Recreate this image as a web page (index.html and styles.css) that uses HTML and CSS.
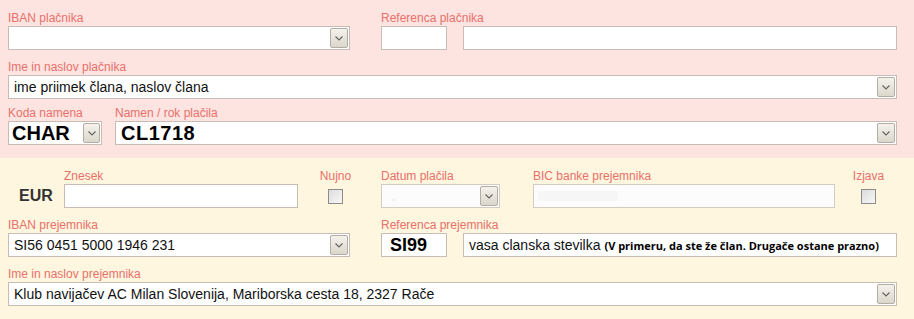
FILE: index.html
```html
<!DOCTYPE html>
<html lang="sl">
<head>
    <meta charset="UTF-8">
    <title>UPN nalog</title>
    <link rel="stylesheet" href="styles.css">
</head>
<body>

<div class="upn">
    <div class="section payer">
        <div class="row row-split">
            <div class="field">
                <div class="label">IBAN plačnika</div>
                <div class="box select"><span class="value"></span><span class="btn"><svg width="8" height="5" viewBox="0 0 8 5"><polyline points="0.5,0.5 4,4 7.5,0.5" fill="none" stroke="#666" stroke-width="1.2"/></svg></span></div>
            </div>
            <div class="field">
                <div class="label">Referenca plačnika</div>
                <div class="ref">
                    <div class="box ref-model"></div>
                    <div class="box ref-number"></div>
                </div>
            </div>
        </div>

        <div class="row row-gap">
            <div class="field">
                <div class="label">Ime in naslov plačnika</div>
                <div class="box select"><span class="value">ime priimek člana, naslov člana</span><span class="btn"><svg width="8" height="5" viewBox="0 0 8 5"><polyline points="0.5,0.5 4,4 7.5,0.5" fill="none" stroke="#666" stroke-width="1.2"/></svg></span></div>
            </div>
        </div>

        <div class="row row-purpose">
            <div class="field">
                <div class="label">Koda namena</div>
                <div class="box select code"><span class="value big">CHAR</span><span class="btn"><svg width="8" height="5" viewBox="0 0 8 5"><polyline points="0.5,0.5 4,4 7.5,0.5" fill="none" stroke="#666" stroke-width="1.2"/></svg></span></div>
            </div>
            <div class="field">
                <div class="label">Namen / rok plačila</div>
                <div class="box select"><span class="value big purpose">CL1718</span><span class="btn"><svg width="8" height="5" viewBox="0 0 8 5"><polyline points="0.5,0.5 4,4 7.5,0.5" fill="none" stroke="#666" stroke-width="1.2"/></svg></span></div>
            </div>
        </div>
    </div>

    <div class="section payee">
        <div class="row-amount">
            <div class="currency">EUR</div>
            <div class="field amount">
                <div class="label">Znesek</div>
                <div class="box"></div>
            </div>
            <div class="field check-field urgent">
                <div class="label">Nujno</div>
                <span class="check"></span>
            </div>
            <div class="field date">
                <div class="label">Datum plačila</div>
                <div class="box select disabled"><span class="value"><span class="dot"></span></span><span class="btn"><svg width="8" height="5" viewBox="0 0 8 5"><polyline points="0.5,0.5 4,4 7.5,0.5" fill="none" stroke="#666" stroke-width="1.2"/></svg></span></div>
            </div>
            <div class="field bic">
                <div class="label">BIC banke prejemnika</div>
                <div class="box disabled"><span class="blur"></span></div>
            </div>
            <div class="field check-field statement">
                <div class="label">Izjava</div>
                <span class="check"></span>
            </div>
        </div>

        <div class="row row-split row-gap">
            <div class="field">
                <div class="label">IBAN prejemnika</div>
                <div class="box select"><span class="value">SI56 0451 5000 1946 231</span><span class="btn"><svg width="8" height="5" viewBox="0 0 8 5"><polyline points="0.5,0.5 4,4 7.5,0.5" fill="none" stroke="#666" stroke-width="1.2"/></svg></span></div>
            </div>
            <div class="field">
                <div class="label">Referenca prejemnika</div>
                <div class="ref">
                    <div class="box ref-model"><span class="value model">SI99</span></div>
                    <div class="box ref-number"><span class="value">vasa clanska stevilka <b class="note">(V primeru, da ste že član. Drugače ostane prazno)</b></span></div>
                </div>
            </div>
        </div>

        <div class="row row-gap">
            <div class="field">
                <div class="label">Ime in naslov prejemnika</div>
                <div class="box select"><span class="value">Klub navijačev AC Milan Slovenija, Mariborska cesta 18, 2327 Rače</span><span class="btn"><svg width="8" height="5" viewBox="0 0 8 5"><polyline points="0.5,0.5 4,4 7.5,0.5" fill="none" stroke="#666" stroke-width="1.2"/></svg></span></div>
            </div>
        </div>
    </div>
</div>

</body>
</html>
```

FILE: styles.css
```css
body {
    margin: 0;
    font-family: "Liberation Sans", Arial, sans-serif;
    background-color: #fff6df;
}
.upn {
    width: 914px;
}
.section {
    padding: 10px 17px 0 8px;
}
.payer {
    background-color: #fee4e1;
    height: 148px;
}
.payee {
    background-color: #fff6df;
    height: 151px;
}
.row {
    display: grid;
    grid-template-columns: 889px;
}
.row-gap {
    margin-top: 9px;
}
.row-purpose {
    margin-top: 6px;
    grid-template-columns: 94px 782px;
    column-gap: 13px;
}
.row-split {
    grid-template-columns: 342px 516px;
    column-gap: 31px;
}
.field {
    min-width: 0;
}
.label {
    height: 16px;
    font-size: 12px;
    line-height: 16px;
    color: #e8706a;
    white-space: nowrap;
}
.box {
    box-sizing: border-box;
    height: 24px;
    background-color: #fff;
    border: 1px solid #c6beb6;
    display: flex;
    align-items: center;
}
.select .value {
    flex: 1;
}
.value {
    padding-left: 5px;
    font-size: 14px;
    color: #111;
    white-space: nowrap;
    overflow: hidden;
}
.btn {
    box-sizing: border-box;
    width: 18px;
    height: 20px;
    margin-right: 1px;
    border: 1px solid #b3ada3;
    border-radius: 2px;
    background: linear-gradient(#f5f2ec, #dcd7cc);
    display: flex;
    align-items: center;
    justify-content: center;
}
.code .btn {
    width: 17px;
}
.big {
    font-size: 20px;
    font-weight: bold;
    color: #000;
    padding-left: 3px;
}
.purpose {
    padding-left: 5px;
    letter-spacing: 0.5px;
}
.ref {
    display: flex;
    gap: 16px;
}
.ref-model {
    width: 66px;
}
.ref-number {
    flex: 1;
    min-width: 0;
}
.model {
    padding-left: 8px;
    font-size: 18px;
    font-weight: bold;
    color: #000;
}
.note {
    font-family: "Open Sans", "Liberation Sans", sans-serif;
    font-size: 11px;
    color: #000;
}

/* amount row: fixed widths, uneven spacing */
.row-amount {
    display: flex;
}
.currency {
    width: 56px;
    padding-top: 16px;
    height: 24px;
    line-height: 24px;
    text-align: center;
    font-size: 16px;
    font-weight: bold;
    color: #333;
}
.amount {
    width: 234px;
}
.urgent {
    width: 33px;
    margin-left: 21px;
}
.date {
    width: 119px;
    margin-left: 29px;
}
.bic {
    width: 302px;
    margin-left: 33px;
}
.statement {
    width: 35px;
    margin-left: 16px;
}
.check-field {
    display: flex;
    flex-direction: column;
    align-items: center;
}
.check {
    box-sizing: border-box;
    width: 15px;
    height: 15px;
    margin-top: 5px;
    border: 1px solid #8e8c88;
    background: linear-gradient(135deg, #dcdcdc, #f7f7f7);
}
.disabled {
    border-color: #d2ccc5;
    background-color: #fcfcfc;
}
.dot {
    display: inline-block;
    width: 1px;
    height: 2px;
    margin-left: 6px;
    background-color: #ddd;
}
.blur {
    display: inline-block;
    width: 80px;
    height: 10px;
    margin-left: 4px;
    background-color: #f6f6f6;
}
```
